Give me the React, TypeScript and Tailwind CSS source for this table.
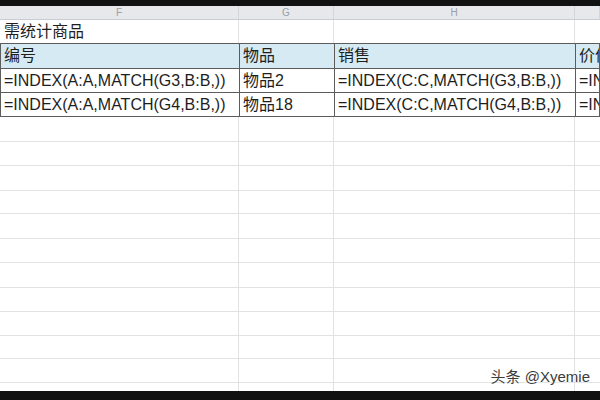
import React from "react";

const cols = "grid grid-cols-[239px_95px_241px_1fr]";
const font = "font-['Liberation_Sans','Noto_Sans_CJK_SC',sans-serif]";

const table = [
  ["编号", "物品", "销售", "价值"],
  ["=INDEX(A:A,MATCH(G3,B:B,))", "物品2", "=INDEX(C:C,MATCH(G3,B:B,))", "=INDEX(D:D,MATCH(G3,B:B,))"],
  ["=INDEX(A:A,MATCH(G4,B:B,))", "物品18", "=INDEX(C:C,MATCH(G4,B:B,))", "=INDEX(D:D,MATCH(G4,B:B,))"],
];

// heights of the empty rows below the table
const emptyRows = [25, 24, 25, 23, 25, 24, 25, 24, 24, 23, 24, 8];

export default function App() {
  return (
    <div className={`relative flex h-[400px] w-[600px] flex-col overflow-hidden bg-white ${font}`}>
      <div className="h-[6px] shrink-0 bg-[#111]" />

      {/* column letters */}
      <div className={`${cols} h-[14px] shrink-0 border-b border-[#c9cdd3] bg-[#e6e8ec] text-[10px] leading-[13px] text-[#9aa0a8]`}>
        {["F", "G", "H", ""].map((c, i) => (
          <div key={i} className="border-r border-[#d2d5da] text-center">
            {c}
          </div>
        ))}
      </div>

      {/* title row */}
      <div className={`${cols} h-[23px] shrink-0 text-[16px] text-[#1e1e1e]`}>
        <div className="flex items-center border-r border-[#e2e2e2] pl-[4px]">需统计商品</div>
        <div className="border-r border-[#e2e2e2]" />
        <div className="border-r border-[#e2e2e2]" />
        <div />
      </div>

      {/* table */}
      <div className="shrink-0 border-t border-l border-[#5c5c5c]">
        {table.map((row, r) => (
          <div
            key={r}
            className={`${cols} ${r === 0 ? "h-[25px] bg-[#d5eaf2]" : "h-[24px]"} border-b border-[#5c5c5c] text-[16px] text-[#1e1e1e]`}
          >
            {row.map((cell, c) => (
              <div
                key={c}
                className="flex items-center overflow-hidden whitespace-nowrap border-r border-[#5c5c5c] pl-[3px]"
              >
                {cell}
              </div>
            ))}
          </div>
        ))}
      </div>

      {/* empty grid */}
      {emptyRows.map((h, i) => (
        <div
          key={i}
          style={{ height: h }}
          className={`${cols} shrink-0 ${i < emptyRows.length - 1 ? "border-b border-[#e2e2e2]" : ""}`}
        >
          <div className="border-r border-[#e2e2e2]" />
          <div className="border-r border-[#e2e2e2]" />
          <div className="border-r border-[#e2e2e2]" />
          <div />
        </div>
      ))}

      <div className="flex-1 bg-[#111]" />

      <div className="absolute bottom-[12px] right-[10px] text-[15px] text-[#3c3c3c] [text-shadow:0_0_2px_#fff,0_0_2px_#fff]">
        头条 @Xyemie
      </div>
    </div>
  );
}
